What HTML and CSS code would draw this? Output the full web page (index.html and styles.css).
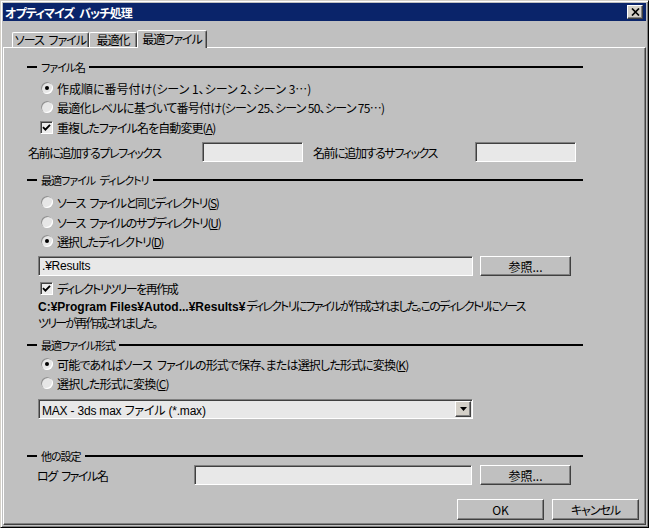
FILE: index.html
```html
<!DOCTYPE html>
<html lang="ja">
<head>
  <meta charset="UTF-8">
  <title>オプティマイズ バッチ処理</title>
  <link rel="stylesheet" href="styles.css">
</head>
<body>

<div class="window">
  <div class="titlebar">
    <span class="title">オプティマイズ バッチ処理</span>
    <span class="close"><svg width="9" height="8" viewBox="0 0 9 8"><path d="M1 0.5L8 7.5M8 0.5L1 7.5" stroke="#000" stroke-width="1.7"/></svg></span>
  </div>

  <div class="tabs">
    <div class="tab t1">ソース ファイル</div>
    <div class="tab t2">最適化</div>
    <div class="tab t3 active">最適ファイル</div>
  </div>

  <div class="panel">
    <!-- ファイル名 -->
    <div class="hdr h1">ファイル名</div>
    <div class="opt r1"><span class="radio on"></span>作成順に番号付け(シーン 1、シーン 2、シーン 3…)</div>
    <div class="opt r2"><span class="radio"></span>最適化レベルに基づいて番号付け(シーン 25、シーン 50、シーン 75…)</div>
    <div class="opt c1"><span class="check"><svg width="9" height="9" viewBox="0 0 9 9"><path d="M1 4.2L3.4 6.6L8 1.8" stroke="#000" stroke-width="1.9" fill="none"/></svg></span>重複したファイル名を自動変更(<u>A</u>)</div>
    <div class="row prefix">
      <span class="lbl pre-lbl">名前に追加するプレフィックス</span>
      <span class="field short"></span>
      <span class="lbl suf-lbl">名前に追加するサフィックス</span>
      <span class="field short"></span>
    </div>

    <!-- ディレクトリ -->
    <div class="hdr h2">最適ファイル ディレクトリ</div>
    <div class="opt r3"><span class="radio"></span>ソース ファイルと同じディレクトリ(<u>S</u>)</div>
    <div class="opt r4"><span class="radio"></span>ソース ファイルのサブディレクトリ(<u>U</u>)</div>
    <div class="opt r5"><span class="radio on"></span>選択したディレクトリ(<u>D</u>)</div>
    <div class="row dir">
      <span class="field wide"><span class="val">.¥Results</span></span>
      <span class="btn browse">参照...</span>
    </div>
    <div class="opt c2"><span class="check"><svg width="9" height="9" viewBox="0 0 9 9"><path d="M1 4.2L3.4 6.6L8 1.8" stroke="#000" stroke-width="1.9" fill="none"/></svg></span>ディレクトリツリーを再作成</div>
    <div class="info"><b>C:¥Program Files¥Autod...¥Results¥</b> ディレクトリにファイルが作成されました。このディレクトリにソース<br>ツリーが再作成されました。</div>

    <!-- 形式 -->
    <div class="hdr h3">最適ファイル形式</div>
    <div class="opt r6"><span class="radio on"></span>可能であればソース ファイルの形式で保存、または選択した形式に変換(<u>K</u>)</div>
    <div class="opt r7"><span class="radio"></span>選択した形式に変換(<u>C</u>)</div>
    <div class="field wide combo">
      <span class="val">MAX - 3ds max ファイル (*.max)</span>
      <span class="arrow"><svg width="7" height="4" viewBox="0 0 7 4"><path d="M0 0H7L3.5 4Z" fill="#000"/></svg></span>
    </div>

    <!-- 他の設定 -->
    <div class="hdr h4">他の設定</div>
    <div class="row log">
      <span class="lbl log-lbl">ログ ファイル名</span>
      <span class="field logfield"></span>
      <span class="btn browse">参照...</span>
    </div>

    <div class="row actions">
      <span class="btn action">OK</span>
      <span class="btn action cancel">キャンセル</span>
    </div>
  </div>
</div>

</body>
</html>
```

FILE: styles.css
```css
body {
  margin: 0;
  background: #c0c0c0;
  font-family: "Noto Sans CJK JP", "Liberation Sans", sans-serif;
  font-size: 12px;
  font-feature-settings: "palt";
  color: #000;
}

.window {
  width: 649px;
  height: 528px;
  box-sizing: border-box;
  border: 1px solid;
  border-color: #d4d0c8 #000 #000 #d4d0c8;
  box-shadow: inset 1px 1px #fff, inset -1px -1px #808080;
  padding: 2px;
  display: flex;
  flex-direction: column;
}

.titlebar {
  height: 18px;
  background: #0a246a;
  color: #fff;
  font-weight: bold;
  display: flex;
  align-items: center;
  justify-content: space-between;
  padding: 0 3px 0 2px;
}
.title { letter-spacing: -0.9px; word-spacing: 3px; }

.close {
  width: 16px;
  height: 14px;
  box-sizing: border-box;
  background: #d4d0c8;
  border: 1px solid;
  border-color: #fff #404040 #404040 #fff;
  box-shadow: inset -1px -1px #808080;
  display: flex;
  align-items: center;
  justify-content: center;
}

.tabs {
  display: flex;
  align-items: flex-end;
  height: 17px;
  margin-top: 9px;
  padding-left: 9px;
}

.tab {
  height: 15px;
  box-sizing: border-box;
  border: 1px solid;
  border-bottom: none;
  border-color: #fff #404040 transparent #fff;
  box-shadow: inset -1px 0 #808080;
  border-radius: 2px 2px 0 0;
  text-align: center;
  line-height: 14px;
  white-space: nowrap;
  letter-spacing: -1px;
  word-spacing: 3px;
}
.t1 { width: 77px; }
.t2 { width: 48px; }
.t3 { width: 70px; }
.tab.active {
  height: 18px;
  margin-bottom: -1px;
  background: #c0c0c0;
  position: relative;
  line-height: 16px;
}

.panel {
  flex: 1;
  border: 1px solid;
  border-color: #fff #404040 #404040 #fff;
  box-shadow: inset -1px -1px #808080;
  padding-left: 23px;
}

/* group header with rule */
.hdr {
  display: flex;
  align-items: center;
  gap: 4px;
  width: 556px;
  height: 14px;
  font-size: 11px;
  letter-spacing: -1px;
  word-spacing: 3px;
  white-space: nowrap;
}
.hdr::before {
  content: "";
  width: 10px;
  height: 2px;
  background: #000;
}
.hdr::after {
  content: "";
  flex: 1;
  height: 2px;
  background: #000;
}

.opt {
  display: flex;
  align-items: center;
  height: 16px;
  padding-left: 14px;
  white-space: nowrap;
  letter-spacing: -1.3px;
  word-spacing: 3px;
}

.radio {
  width: 12px;
  height: 12px;
  flex: none;
  box-sizing: border-box;
  border-radius: 50%;
  background: #e6e6e6;
  box-shadow: inset 1px 1px #909090, inset -1px -1px #fff;
  margin-right: 4px;
  display: flex;
  align-items: center;
  justify-content: center;
}
.radio.on::after {
  content: "";
  width: 4px;
  height: 4px;
  border-radius: 50%;
  background: #000;
}

.check {
  width: 13px;
  height: 13px;
  flex: none;
  box-sizing: border-box;
  margin-left: -1px;
  margin-right: 4px;
  background: #ececec;
  border: 1px solid;
  border-color: #808080 #fff #fff #808080;
  box-shadow: inset 1px 1px #404040;
  display: flex;
  align-items: center;
  justify-content: center;
}

.row {
  display: flex;
  align-items: center;
  height: 20px;
}

.field {
  height: 20px;
  flex: none;
  box-sizing: border-box;
  background: #e8e8e8;
  border: 1px solid;
  border-color: #808080 #fff #fff #808080;
  box-shadow: inset 1px 1px #404040;
  display: flex;
  align-items: center;
}
.val {
  padding-left: 3px;
  font-family: "Liberation Sans", "Noto Sans CJK JP", sans-serif;
  font-size: 12px;
  letter-spacing: -0.2px;
}

.btn {
  height: 20px;
  flex: none;
  box-sizing: border-box;
  border: 1px solid;
  border-color: #fff #404040 #404040 #fff;
  box-shadow: inset -1px -1px #808080;
  display: flex;
  align-items: center;
  justify-content: center;
}
.cancel { letter-spacing: -1px; }

.lbl {
  white-space: nowrap;
  letter-spacing: -1.4px;
  word-spacing: 3px;
}

.h1 { margin-top: 12px; }
.r1 { margin-top: 6px; letter-spacing: 0; word-spacing: 0; }
.r2 { margin-top: 3px; letter-spacing: -0.7px; word-spacing: 0; }
.c1 { margin-top: 4px; letter-spacing: -0.9px; }

.prefix { margin-top: 7px; }
.pre-lbl { width: 175px; padding-left: 1px; box-sizing: border-box; }
.suf-lbl { width: 162px; margin-left: 10px; }
.short { width: 101px; }

.h2 { margin-top: 11px; }
.r3 { margin-top: 7px; }
.r4 { margin-top: 4px; }
.r5 { margin-top: 3px; letter-spacing: -1.2px; }

.dir { margin-top: 7px; padding-left: 11px; gap: 7px; }
.wide { width: 435px; }
.browse { width: 91px; }

.c2 { margin-top: 4px; letter-spacing: -1.5px; }

.info {
  margin-top: 2px;
  padding-left: 11px;
  line-height: 16px;
  white-space: nowrap;
  letter-spacing: -1.8px;
}
.info b {
  font-family: "Liberation Sans", sans-serif;
  font-size: 12px;
  letter-spacing: 0;
}

.h3 { margin-top: 7px; }
.r6 { margin-top: 4px; letter-spacing: -0.85px; }
.r7 { margin-top: 3px; letter-spacing: -0.75px; }

.combo {
  margin-top: 8px;
  margin-left: 11px;
  justify-content: space-between;
}
.arrow {
  width: 16px;
  height: 16px;
  margin-right: 1px;
  box-sizing: border-box;
  background: #d4d0c8;
  border: 1px solid;
  border-color: #fff #404040 #404040 #fff;
  box-shadow: inset -1px -1px #808080;
  display: flex;
  align-items: center;
  justify-content: center;
}

.h4 { margin-top: 30px; }
.log { margin-top: 2px; padding-left: 10px; }
.log-lbl { width: 157px; }
.logfield { width: 278px; margin-right: 8px; }

.actions { margin-top: 14px; margin-left: 430px; gap: 8px; }
.action { width: 87px; height: 21px; }
```
